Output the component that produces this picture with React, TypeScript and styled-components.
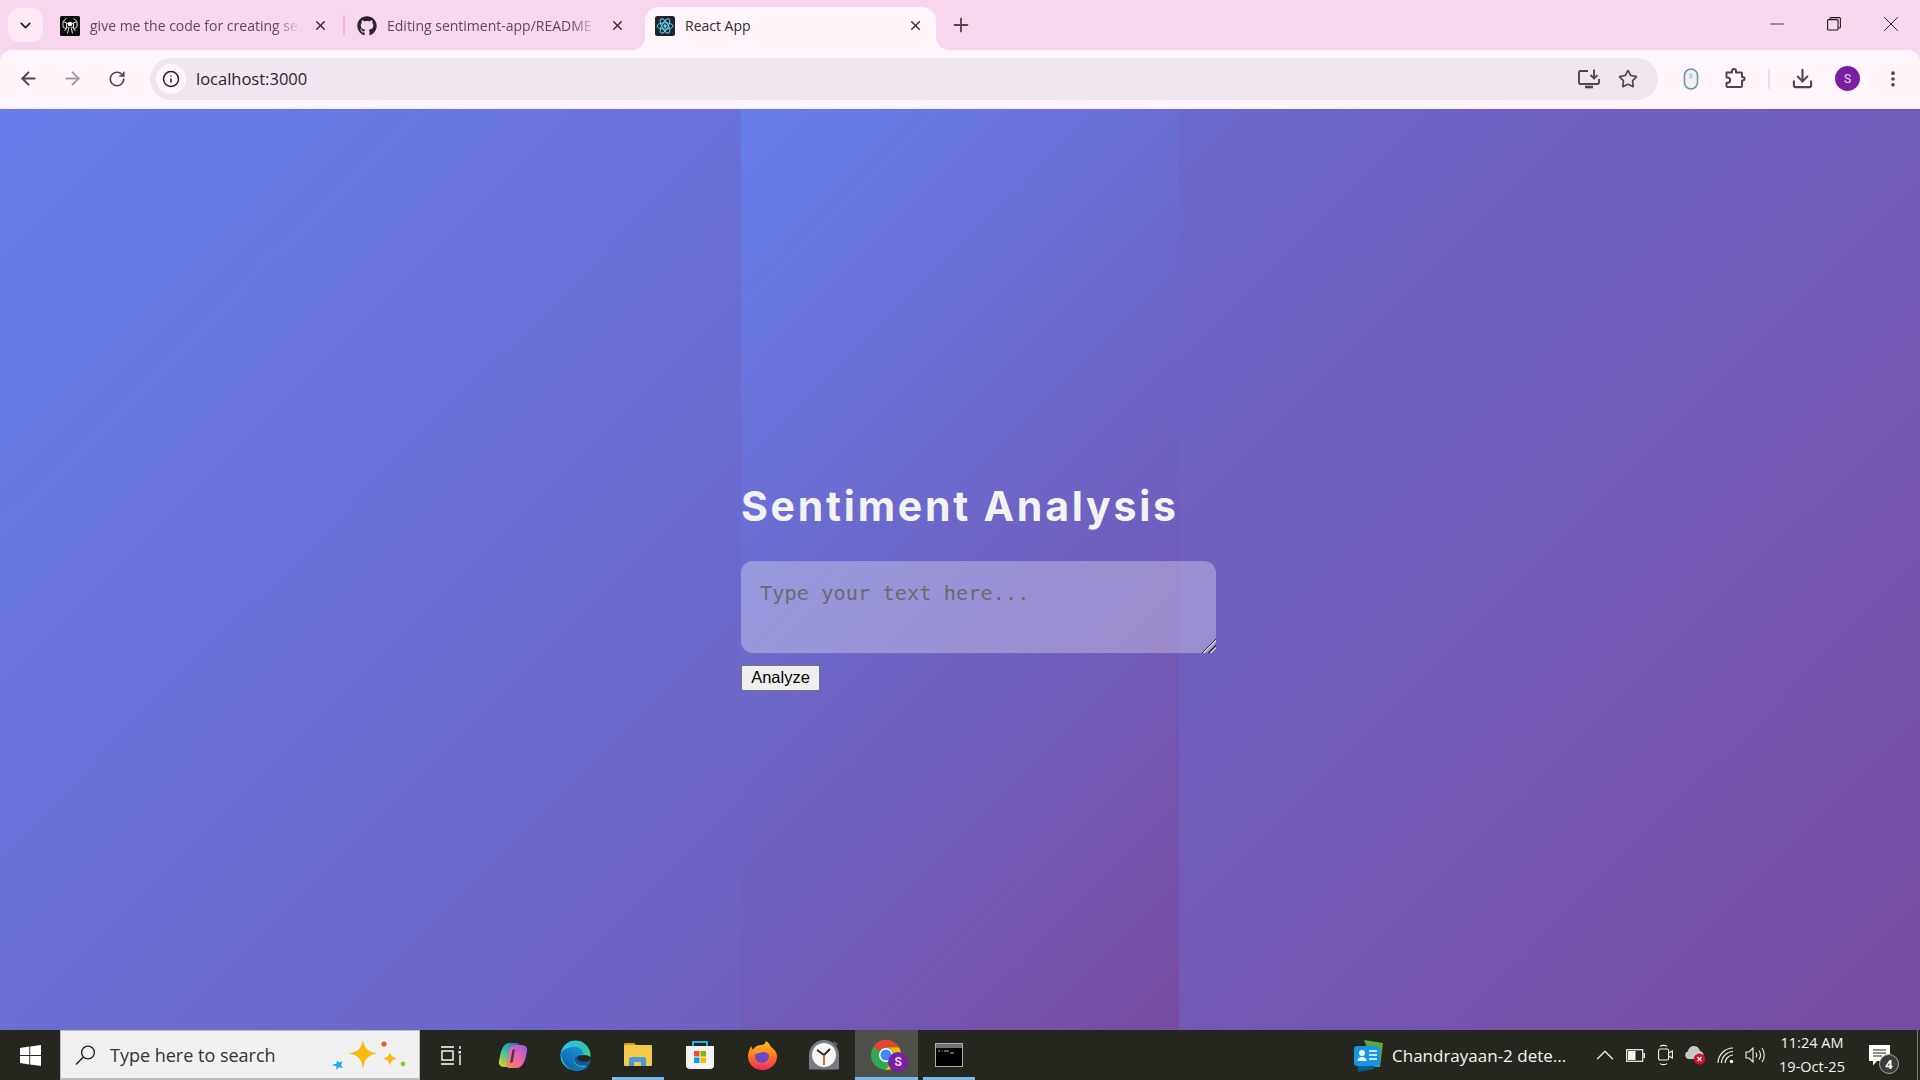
import React from 'react';
import styled, { createGlobalStyle } from 'styled-components';
import { ArrowLeft, ArrowRight, RotateCw, Star, Download, EllipsisVertical, Plus, X, Minus, ChevronDown, Info, ChevronUp } from 'lucide-react';
import { FaGithub } from 'react-icons/fa';

const Global = createGlobalStyle`
  html, body { margin: 0; padding: 0; width: 1920px; height: 1080px; overflow: hidden; }
  body { font-family: "Open Sans", "Noto Sans", sans-serif; }
  * { box-sizing: border-box; }
`;

const Screen = styled.div`
  width: 1920px; height: 1080px; display: flex; flex-direction: column; overflow: hidden;
`;

/* ---------- tab strip ---------- */
const TabStrip = styled.div`
  height: 50px; flex: none; background: #f7d7ee; display: flex; align-items: flex-start; padding-left: 8px;
`;
const TabListButton = styled.div`
  width: 35px; height: 34px; margin-top: 8px; border-radius: 11px; background: #fde8f6;
  display: flex; align-items: center; justify-content: center; color: #2b2230; flex: none;
`;
const Tab = styled.div<{ $active?: boolean; $width: number; $left: number; $right: number }>`
  position: relative; height: 43px; margin-top: 7px; flex: none; width: ${p => p.$width}px;
  padding: 0 ${p => p.$right}px 6px ${p => p.$left}px; display: flex; align-items: center;
  background: ${p => (p.$active ? '#fff5fa' : 'transparent')};
  border-radius: 14px 14px 0 0; color: ${p => (p.$active ? '#2e2a30' : '#5b4a58')};
  ${p => p.$active && `
    &::before, &::after { content: ''; position: absolute; bottom: 0; width: 14px; height: 14px; }
    &::before { left: -14px; background: radial-gradient(circle at 0 0, #f7d7ee 14px, #fff5fa 14.5px); }
    &::after { right: -14px; background: radial-gradient(circle at 100% 0, #f7d7ee 14px, #fff5fa 14.5px); }
  `}
`;
const Favicon = styled.div`
  width: 20px; height: 20px; flex: none; display: flex; align-items: center; justify-content: center; margin-right: 10px;
`;
const TabTitle = styled.div<{ $fade?: boolean }>`
  flex: 1; min-width: 0; white-space: nowrap; overflow: hidden; font-size: 14px; line-height: 20px; margin-right: 11px;
  ${p => p.$fade && `-webkit-mask-image: linear-gradient(to right, #000 88%, transparent 100%); mask-image: linear-gradient(to right, #000 88%, transparent 100%);`}
`;
const TabClose = styled.div`
  width: 18px; height: 18px; flex: none; display: flex; align-items: center; justify-content: center; color: #3a3038;
`;
const TabSeparator = styled.div`
  width: 2px; height: 20px; margin-top: 15px; background: #f0b4e2; flex: none;
`;
const NewTab = styled.div`
  width: 30px; height: 30px; margin: 10px 0 0 10px; color: #57414f; display: flex; align-items: center; justify-content: center; flex: none;
`;
const WindowControls = styled.div`
  margin-left: auto; display: flex; padding-right: 1px; height: 48px;
`;
const WindowButton = styled.div`
  width: 57px; height: 48px; display: flex; align-items: center; justify-content: center; color: #1d1a1c;
`;

/* ---------- toolbar ---------- */
const ToolBack = styled.div`
  background: #f7d7ee;
`;
const Toolbar = styled.div`
  height: 57px; flex: none; background: #fff5fa; display: flex; align-items: center;
  padding: 0 5px 0 6px; border-radius: 12px 12px 0 0;
`;
const ToolbarEdge = styled.div`
  height: 2px; flex: none; background: #fdeef3;
`;
const NavButton = styled.div<{ $dim?: boolean }>`
  width: 44.5px; height: 40px; flex: none; display: flex; align-items: center; justify-content: center;
  color: ${p => (p.$dim ? '#a89aa5' : '#54434f')};
`;
const Omnibox = styled.div`
  flex: 1; height: 42px; margin-left: 10.5px; border-radius: 21px; background: #f0e6ef; display: flex; align-items: center;
  padding: 0 11px 0 6px;
`;
const SiteInfo = styled.div`
  width: 30px; height: 30px; border-radius: 50%; background: #fff5fa; display: flex; align-items: center; justify-content: center;
  color: #201c20; flex: none;
`;
const Url = styled.div`
  margin-left: 10px; font-size: 16.5px; color: #27252b; flex: 1;
`;
const OmniAction = styled.div`
  width: 39px; height: 38px; flex: none; display: flex; align-items: center; justify-content: center; color: #54434f;
`;
const ToolSlot = styled.div`
  width: 45px; height: 40px; flex: none; display: flex; align-items: center; justify-content: center; color: #54434f;
`;
const ToolGroup = styled.div`
  display: flex; align-items: center; margin-left: 10px; flex: none;
`;
const ToolSeparator = styled.div`
  width: 2px; height: 20px; background: #fbd5ef; margin: 0 10px 0 10px; flex: none;
`;
const Avatar = styled.div`
  width: 25px; height: 25px; border-radius: 50%; background: #7b1fa2; color: #f0dcf5; font-size: 12px;
  display: flex; align-items: center; justify-content: center; font-family: "Roboto", sans-serif;
`;

/* ---------- page ---------- */
const Page = styled.main`
  flex: 1; min-height: 0; background: linear-gradient(135deg, #667eea 0%, #764ba2 100%);
  display: flex; justify-content: center;
`;
const Column = styled.div`
  width: 438px; background: linear-gradient(135deg, #667eea 0%, #764ba2 100%);
  display: flex; flex-direction: column; justify-content: center; align-items: flex-start;
`;
const Title = styled.h1`
  margin: 27px 0 26px; font-family: "Inter", sans-serif; font-weight: 700; font-size: 41px; line-height: 62px;
  letter-spacing: 2.75px; color: #f3f3f6; white-space: nowrap; height: 60px;
`;
const TextInput = styled.textarea`
  display: block; width: 475px; height: 92px; flex: none; margin: 0 0 12px; padding: 20px 19px; border: none; outline: none;
  border-radius: 12px; background: rgba(255, 255, 255, 0.3); font-family: "DejaVu Sans Mono", monospace; font-size: 20.2px;
  line-height: 24px; letter-spacing: 0.1px; color: #222;
  &::placeholder { color: #6a6a6a; opacity: 1; }
  &::-webkit-resizer {
    background: linear-gradient(135deg, transparent 50%, #333 50%, #333 56%, #ccc 56%, #ccc 62%, transparent 62%, transparent 72%, #333 72%, #333 78%, #ccc 78%, #ccc 84%, transparent 84%);
  }
`;
const AnalyzeButton = styled.button`
  width: 79px; height: 26px; padding: 0 0 2px; flex: none; background: #efefef; border: 1px solid #767676; border-radius: 2px;
  font-family: "Liberation Sans", Arial, sans-serif; font-size: 16.5px; line-height: 22px; color: #000;
`;

/* ---------- taskbar ---------- */
const Taskbar = styled.footer`
  height: 50px; flex: none; background: #25261d; display: flex; align-items: stretch; color: #fff;
`;
const StartButton = styled.div`
  width: 60px; flex: none; display: flex; align-items: center; justify-content: center;
`;
const SearchBox = styled.div`
  width: 360px; flex: none; background: #f1f1f1; border: 1px solid #bdbdbd; border-bottom-width: 2px; display: flex; align-items: center;
  color: #2a2a2a; padding: 0 11px 0 13px;
`;
const SearchIcon = styled.div`
  width: 22px; height: 24px; flex: none; display: flex; align-items: center; justify-content: center;
`;
const SearchText = styled.div`
  margin-left: 14px; font-size: 18px; flex: 1; color: #333; white-space: nowrap;
`;
const TaskIcon = styled.div<{ $active?: boolean; $running?: boolean }>`
  position: relative; width: 62.2px; flex: none; display: flex; align-items: center; justify-content: center;
  background: ${p => (p.$active ? '#4f504a' : 'transparent')};
  ${p => p.$running && `
    &::after { content: ''; position: absolute; bottom: 0; height: 3px; background: #76b9ed;
      left: ${p.$active ? '0' : '5px'}; right: ${p.$active ? '0' : '5px'}; }
  `}
`;
const IconBadge = styled.div`
  position: absolute; left: 33px; top: 22px; width: 20px; height: 20px; border-radius: 50%; background: #7b1fa2;
  color: #e8d6ee; font-size: 12px; font-weight: 700; display: flex; align-items: center; justify-content: center;
  font-family: "Roboto", sans-serif;
`;
const TrayArea = styled.div`
  margin-left: auto; display: flex; align-items: center; flex: none;
`;
const News = styled.div`
  display: flex; align-items: center; width: 236px; flex: none;
`;
const NewsText = styled.div`
  margin-left: 9px; font-size: 17px; color: #f4f4f4; white-space: nowrap;
`;
const TraySlot = styled.div`
  width: 30px; height: 50px; flex: none; display: flex; align-items: center; justify-content: center; color: #f2f2f2;
`;
const Clock = styled.div`
  width: 84px; flex: none; text-align: center; font-size: 14.5px; line-height: 24px; color: #f2f2f2; white-space: nowrap;
`;
const Notify = styled.div`
  position: relative; width: 63px; height: 50px; flex: none; display: flex; align-items: center; padding-left: 15px;
`;
const NotifyCount = styled.div`
  position: absolute; left: 25px; top: 24px; width: 20px; height: 20px; border-radius: 50%; background: #3a3a36; border: 1px solid #a8a8a8;
  font-size: 13px; font-weight: 700; display: flex; align-items: center; justify-content: center; color: #fff;
`;
const DesktopEdge = styled.div`
  width: 1px; margin: 0 2px 0 0; height: 50px; background: #77786f; flex: none;
`;

/* ---------- drawings ---------- */
const SpiderFavicon = () => (
  <svg width="20" height="20" viewBox="0 0 20 20">
    <rect width="20" height="20" rx="1.500" fill="#0b0b0b" />
    <g fill="none" stroke="#dcdcdc" strokeWidth="1">
      <path d="M6.500 2.500 3 5.500v5.500l3 2M13.500 2.500 17 5.500v5.500l-3 2" />
      <path d="M3 5.500l5 2M17 5.500l-5 2M4.500 15 8 10.500M15.500 15 12 10.500M7.500 17.500 9 11M12.500 17.500 11 11M6.500 7v5M13.500 7v5" />
    </g>
    <circle cx="10" cy="8" r="2.300" fill="#fff" />
  </svg>
);
const ReactIcon = () => (
  <svg width="20" height="20" viewBox="0 0 20 20">
    <rect width="20" height="20" rx="2.500" fill="#20232a" />
    <circle cx="10" cy="10" r="1.700" fill="#61dafb" />
    <g fill="none" stroke="#61dafb" strokeWidth="1">
      <ellipse cx="10" cy="10" rx="8" ry="3.200" />
      <ellipse cx="10" cy="10" rx="8" ry="3.200" transform="rotate(60 10 10)" />
      <ellipse cx="10" cy="10" rx="8" ry="3.200" transform="rotate(120 10 10)" />
    </g>
  </svg>
);
const RestoreIcon = () => (
  <svg width="14" height="14" viewBox="0 0 14 14" fill="none" stroke="currentColor" strokeWidth="1.100">
    <rect x="0.600" y="2.600" width="10.400" height="10.400" rx="1" />
    <path d="M3 2.500V1.600A1 1 0 0 1 4 .6h8.400a1 1 0 0 1 1 1V10a1 1 0 0 1-1 1H11" />
  </svg>
);
const MonitorDownload = () => (
  <svg width="22" height="20" viewBox="0 0 22 20" fill="none" stroke="currentColor" strokeWidth="1.900">
    <path d="M10 2H2.200A1.200 1.200 0 0 0 1 3.200v10.600A1.200 1.200 0 0 0 2.200 15h17.600a1.200 1.200 0 0 0 1.200-1.200V10" />
    <path d="M16 0.500V9M12.500 6l3.500 3.500L19.500 6" />
    <path d="M7 18h8" strokeWidth="2.600" />
  </svg>
);
const MouseExt = () => (
  <svg width="16" height="22" viewBox="0 0 16 22">
    <rect x="1.500" y="1" width="13" height="20" rx="6.500" fill="#f3f0f5" stroke="#6d95a2" strokeWidth="1.600" />
    <rect x="6.200" y="5" width="3.600" height="6" rx="1.800" fill="#c4d4de" />
  </svg>
);
const ExtensionPiece = () => (
  <svg width="21" height="21" viewBox="0 0 21 21" fill="none" stroke="currentColor" strokeWidth="2" strokeLinejoin="round">
    <path d="M1.500 4.500H7V3a2 2 0 0 1 4 0v1.500h5a1 1 0 0 1 1 1V9h.8a1.800 1.800 0 0 1 0 3.600H17V18a1 1 0 0 1-1 1H2.500a1 1 0 0 1-1-1v-3.200h1a2.600 2.600 0 0 0 0-5.200h-1z" />
  </svg>
);
const WinLogo = () => (
  <svg width="21" height="21" viewBox="0 0 21 21" fill="#fff">
    <path d="M0 3 9.300 1.600V10H0zM10.200 1.500 21 0v10H10.200zM0 11h9.300v8.400L0 18zM10.200 11H21v10l-10.800-1.500z" />
  </svg>
);
const Magnifier = () => (
  <svg width="21" height="22" viewBox="0 0 21 22" fill="none" stroke="#222" strokeWidth="1.400">
    <circle cx="13" cy="8.500" r="6.400" />
    <path d="M8.400 13 1 20.500" />
  </svg>
);
const Sparkles = () => (
  <svg width="76" height="32" viewBox="0 0 76 32">
    <path d="M31 1c1.500 8 4 11.500 14.500 13.500C35 16.500 32.500 20 31 30c-1.500-10-4-13.500-14.500-15.500C27 12.500 29.500 9 31 1z" fill="#fdb913" />
    <path d="M58 13c.7 3.500 2 5 6.800 6.500C60 21 58.700 22.500 58 27c-.7-4.500-2-6-6.800-7.500C56 18 57.300 16.500 58 13z" fill="#fdb913" />
    <path d="M5 21.500l2 2 3.500-1-1.500 3.500 1.500 3-3.500-.7L4 31l.5-3.700L0 26l4.500-1.500z" fill="#1fa8ee" />
    <circle cx="52" cy="5" r="2.600" fill="#f25c26" />
    <circle cx="71" cy="25" r="2.400" fill="#8ccb3c" />
  </svg>
);
const TaskView = () => (
  <svg width="20" height="19" viewBox="0 0 20 19" fill="none" stroke="#fff" strokeWidth="1.400">
    <path d="M0 1h13M0 18h13" />
    <rect x="1" y="5" width="11" height="9" />
    <path d="M19 0v3M19 9v10" />
    <rect x="17.500" y="5" width="3" height="2.500" fill="#fff" stroke="none" />
  </svg>
);
const Copilot = () => (
  <svg width="30" height="27" viewBox="0 0 30 27">
    <defs>
      <linearGradient id="cpa" x1="0" y1="1" x2="1" y2="0">
        <stop offset="0" stopColor="#f6d21c" /><stop offset=".45" stopColor="#3fc3a0" /><stop offset="1" stopColor="#1a5fd8" />
      </linearGradient>
      <linearGradient id="cpb" x1="0" y1="1" x2="1" y2="0">
        <stop offset="0" stopColor="#f4903a" /><stop offset=".5" stopColor="#ee62a8" /><stop offset="1" stopColor="#8c5be8" />
      </linearGradient>
    </defs>
    <path d="M11 1h7c3 0 4 1.500 4 4l-3 14c-.8 3.500-3 6-7 6H7c-4 0-7-2-6-6l1-5C3 8 6 1 11 1z" fill="url(#cpa)" />
    <path d="M19 26h-7c-3 0-4-1.500-3.500-4l2.500-13c.8-3.500 3-6 7-6h5c4 0 7 2 6 6l-1 5C27 19 24 26 19 26z" fill="url(#cpb)" />
    <path d="M14 10c0-2 1-3 3-3l-2 12c0 1-1 2-3 2z" fill="#10264f" opacity=".75" />
  </svg>
);
const Edge = () => (
  <svg width="31" height="31" viewBox="0 0 31 31">
    <defs>
      <linearGradient id="eda" x1="0" y1="0" x2="1" y2="1">
        <stop offset="0" stopColor="#35c1f1" /><stop offset=".55" stopColor="#32c5b0" /><stop offset="1" stopColor="#7edb5c" />
      </linearGradient>
      <linearGradient id="edb" x1="0" y1="1" x2="1" y2="0">
        <stop offset="0" stopColor="#0c59a4" /><stop offset="1" stopColor="#1b9de2" />
      </linearGradient>
    </defs>
    <circle cx="15.500" cy="15.500" r="15" fill="url(#eda)" />
    <path d="M1 14C2 24 10 31 17 31c5 0 9-2 12-6-3 2-8 2.500-12 0-4-2.500-4-7-1-9 3-2 8-2 8-2C22 8 17 6 12 7 6 8 2 10 1 14z" fill="url(#edb)" />
    <path d="M17 15.500c-3 1-4 5-1 8 3.500 3 8 2.500 13 1.500 1.500-2 2-5 1.500-8-3-2-9-3-13.500-1.500z" fill="#0c59a4" />
    <ellipse cx="24" cy="18.500" rx="7" ry="3.200" fill="#25261d" />
  </svg>
);
const Folder = () => (
  <svg width="28" height="26" viewBox="0 0 28 26">
    <path d="M0 2a1 1 0 0 1 1-1h9l3 3H0z" fill="#d49b12" />
    <rect x="0" y="3" width="28" height="21" rx="1" fill="#f5c94c" />
    <path d="M5 24v-7a2 2 0 0 1 2-2h13a2 2 0 0 1 2 2v7h-5v-4h-7v4z" fill="#4a9ad8" />
  </svg>
);
const Store = () => (
  <svg width="30" height="30" viewBox="0 0 30 30">
    <path d="M8 7V2h14v5" fill="none" stroke="#1fb0e6" strokeWidth="2" />
    <path d="M1 6h28v19a4 4 0 0 1-4 4H5a4 4 0 0 1-4-4z" fill="#f4f4f4" />
    <rect x="9" y="11" width="5.500" height="5.500" fill="#f25022" />
    <rect x="15.500" y="11" width="5.500" height="5.500" fill="#7fba00" />
    <rect x="9" y="17.500" width="5.500" height="5.500" fill="#00a4ef" />
    <rect x="15.500" y="17.500" width="5.500" height="5.500" fill="#ffb900" />
  </svg>
);
const Firefox = () => (
  <svg width="29" height="29" viewBox="0 0 29 29">
    <defs>
      <linearGradient id="ffa" x1="0" y1="0" x2="0" y2="1">
        <stop offset="0" stopColor="#ffc21f" /><stop offset=".5" stopColor="#ff7a1c" /><stop offset="1" stopColor="#ee2a63" />
      </linearGradient>
    </defs>
    <path d="M14.500 29C6 29 0 23 0 15 0 11 2 7 3.500 5c0 2 .5 3 1.500 3.500C6.500 6 10 4 13 4c2 0 4-.5 5-4 3 2 4 4 5 6 3 2 6 5 6 9 0 8-6 14-14.500 14z" fill="url(#ffa)" />
    <circle cx="14" cy="15" r="7" fill="#6e46c8" />
    <path d="M7 13c1-4 5-6 9-5 3 .8 5 3 5.500 6-2-2.500-5-3.500-8-2.500-2 .5-4 .5-6.500 1.500z" fill="#ff9a1c" />
  </svg>
);
const ClockApp = () => (
  <svg width="30" height="30" viewBox="0 0 30 30">
    <path d="M25 1l4 3-2 2-3-3z" fill="#55585c" />
    <path d="M0 15a15 15 0 0 1 30 0v13a1.500 1.500 0 0 1-1.500 1.500h-27A1.500 1.500 0 0 1 0 28z" fill="#767c85" />
    <circle cx="15" cy="15" r="12" fill="#f6f6f6" />
    <path d="M15 15 8 10M15 15l6-6" stroke="#222" strokeWidth="1.800" fill="none" />
    <path d="M15 15v10" stroke="#e0431c" strokeWidth="1.600" />
  </svg>
);
const ChromeIcon = () => (
  <svg width="30" height="30" viewBox="0 0 30 30">
    <circle cx="15" cy="15" r="15" fill="#34a853" />
    <path d="M15 0a15 15 0 0 1 13 7.500H15A7.500 7.500 0 0 0 8.500 11.200L2.500 7A15 15 0 0 1 15 0z" fill="#ea4335" />
    <path d="M28 7.500A15 15 0 0 1 15 30l6.500-11.200A7.500 7.500 0 0 0 15 7.500z" fill="#fbbc04" />
    <circle cx="15" cy="15" r="7" fill="#fff" />
    <circle cx="15" cy="15" r="5.500" fill="#4285f4" />
  </svg>
);
const Cmd = () => (
  <svg width="28" height="24" viewBox="0 0 28 24">
    <rect x=".5" y=".5" width="27" height="23" fill="#000" stroke="#a9adb2" />
    <rect x="1" y="1" width="26" height="4" fill="#6d7075" />
    <path d="M3 8h2M6.500 8h1M9 8h5M15 10h4" stroke="#b8b8b8" strokeWidth="1" />
  </svg>
);
const NewsIcon = () => (
  <svg width="29" height="33" viewBox="0 0 29 33">
    <path d="M10 1l19 3-3 24-6 0z" fill="#5fa83a" />
    <path d="M3 24h18l-1 6L4 33z" fill="#0a5a8c" />
    <rect x="0" y="7" width="26" height="20" rx="3" fill="#1596e8" />
    <circle cx="8" cy="14" r="3" fill="#fff" />
    <path d="M3.500 22c0-3 2-4 4.500-4s4.500 1 4.500 4z" fill="#fff" />
    <path d="M15 12h8M15 16h8M15 20h8" stroke="#fff" strokeWidth="1.600" />
  </svg>
);
const Battery = () => (
  <svg width="19" height="13" viewBox="0 0 19 13" fill="none">
    <rect x=".7" y=".7" width="16" height="11.600" stroke="#f2f2f2" strokeWidth="1.200" />
    <rect x="2" y="2" width="7.500" height="9" fill="#f2f2f2" />
    <rect x="17.500" y="4" width="1.500" height="5" fill="#f2f2f2" />
  </svg>
);
const CameraTray = () => (
  <svg width="15" height="22" viewBox="0 0 15 22" fill="none" stroke="#f2f2f2" strokeWidth="1.100">
    <rect x=".6" y="5" width="10" height="11" rx="1.500" />
    <path d="M10.600 9 14.400 7v7l-3.800-2M2 2.500C3 1 8 1 9 2.500M2 19.500C3 21 8 21 9 19.500" />
  </svg>
);
const CloudError = () => (
  <svg width="21" height="20" viewBox="0 0 21 20">
    <path d="M4 14a4 4 0 0 1-1-7.800C3.500 3 6 1 9 1c3 0 5.500 2 6 5 2 .5 3.500 2 3.500 4H12v4z" fill="#c8c8c8" />
    <circle cx="14.500" cy="14" r="5.600" fill="#d3122b" />
    <path d="M12.500 12l4 4M16.500 12l-4 4" stroke="#fff" strokeWidth="1.300" />
  </svg>
);
const WifiIcon = () => (
  <svg width="17" height="17" viewBox="0 0 17 17" fill="none" stroke="#f2f2f2" strokeWidth="1.100">
    <path d="M1 16C1 8 8 1 16 1M4.500 16C4.500 10 10 4.500 16 4.500M8 16c0-4 4-8 8-8" />
    <circle cx="14.500" cy="14.500" r="1.800" fill="#f2f2f2" stroke="none" />
  </svg>
);
const Speaker = () => (
  <svg width="20" height="18" viewBox="0 0 20 18" fill="none" stroke="#f2f2f2" strokeWidth="1.100">
    <path d="M1 6h3l4-4v14l-4-4H1z" />
    <path d="M11 6.500c1 1.500 1 3.500 0 5M14 4.500c2 2.500 2 6.500 0 9M17 2c3 4 3 10 0 14" />
  </svg>
);
const NotifyGlyph = () => (
  <svg width="21" height="21" viewBox="0 0 21 21">
    <path d="M0 0h21v16H8l-4 4.500V16H0z" fill="#fff" />
    <path d="M4 5h13M4 8h13M4 11h9" stroke="#25261d" strokeWidth="1.200" />
  </svg>
);

export default function App() {
  return (
    <Screen>
      <Global />
      <TabStrip>
        <TabListButton><ChevronDown size={17} strokeWidth={2.6} /></TabListButton>
        <Tab $width={300} $left={17} $right={14}>
          <Favicon><SpiderFavicon /></Favicon>
          <TabTitle $fade>give me the code for creating se</TabTitle>
          <TabClose><X size={15} strokeWidth={2.4} /></TabClose>
        </Tab>
        <TabSeparator />
        <Tab $width={300} $left={12} $right={19}>
          <Favicon><FaGithub size={20} color="#2c2530" /></Favicon>
          <TabTitle $fade>Editing sentiment-app/README</TabTitle>
          <TabClose><X size={15} strokeWidth={2.4} /></TabClose>
        </Tab>
        <Tab $active $width={291} $left={10} $right={12}>
          <Favicon><ReactIcon /></Favicon>
          <TabTitle>React App</TabTitle>
          <TabClose><X size={15} strokeWidth={2.4} /></TabClose>
        </Tab>
        <NewTab><Plus size={22} strokeWidth={2} /></NewTab>
        <WindowControls>
          <WindowButton><Minus size={22} strokeWidth={0.9} /></WindowButton>
          <WindowButton><RestoreIcon /></WindowButton>
          <WindowButton><X size={26} strokeWidth={0.85} /></WindowButton>
        </WindowControls>
      </TabStrip>
      <ToolBack>
        <Toolbar>
          <NavButton><ArrowLeft size={21} strokeWidth={2.2} /></NavButton>
          <NavButton $dim><ArrowRight size={21} strokeWidth={2.2} /></NavButton>
          <NavButton><RotateCw size={18} strokeWidth={2.2} /></NavButton>
          <Omnibox>
            <SiteInfo><Info size={18} strokeWidth={2} /></SiteInfo>
            <Url>localhost:3000</Url>
            <OmniAction><MonitorDownload /></OmniAction>
            <OmniAction><Star size={20} strokeWidth={2} /></OmniAction>
          </Omnibox>
          <ToolGroup>
            <ToolSlot><MouseExt /></ToolSlot>
            <ToolSlot><ExtensionPiece /></ToolSlot>
            <ToolSeparator />
            <ToolSlot><Download size={23} strokeWidth={2.2} /></ToolSlot>
            <ToolSlot><Avatar>S</Avatar></ToolSlot>
            <ToolSlot><EllipsisVertical size={20} strokeWidth={2.4} /></ToolSlot>
          </ToolGroup>
        </Toolbar>
      </ToolBack>
      <ToolbarEdge />
      <Page>
        <Column>
          <Title>Sentiment Analysis</Title>
          <TextInput placeholder="Type your text here..." />
          <AnalyzeButton>Analyze</AnalyzeButton>
        </Column>
      </Page>
      <Taskbar>
        <StartButton><WinLogo /></StartButton>
        <SearchBox>
          <SearchIcon><Magnifier /></SearchIcon>
          <SearchText>Type here to search</SearchText>
          <Sparkles />
        </SearchBox>
        <TaskIcon><TaskView /></TaskIcon>
        <TaskIcon><Copilot /></TaskIcon>
        <TaskIcon><Edge /></TaskIcon>
        <TaskIcon $running><Folder /></TaskIcon>
        <TaskIcon><Store /></TaskIcon>
        <TaskIcon><Firefox /></TaskIcon>
        <TaskIcon><ClockApp /></TaskIcon>
        <TaskIcon $active $running><ChromeIcon /><IconBadge>S</IconBadge></TaskIcon>
        <TaskIcon $running><Cmd /></TaskIcon>
        <TrayArea>
          <News>
            <NewsIcon />
            <NewsText>Chandrayaan-2 dete...</NewsText>
          </News>
          <TraySlot><ChevronUp size={30} strokeWidth={1} /></TraySlot>
          <TraySlot><Battery /></TraySlot>
          <TraySlot><CameraTray /></TraySlot>
          <TraySlot><CloudError /></TraySlot>
          <TraySlot><WifiIcon /></TraySlot>
          <TraySlot><Speaker /></TraySlot>
          <Clock><div>11:24 AM</div><div>19-Oct-25</div></Clock>
          <Notify><NotifyGlyph /><NotifyCount>4</NotifyCount></Notify>
          <DesktopEdge />
        </TrayArea>
      </Taskbar>
    </Screen>
  );
}
